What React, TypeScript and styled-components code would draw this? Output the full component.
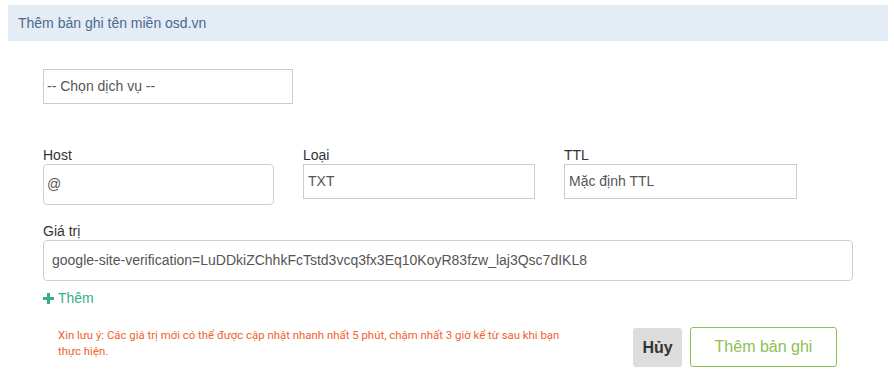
import React from "react";
import styled, { createGlobalStyle } from "styled-components";

const Global = createGlobalStyle`
  html, body { margin: 0; padding: 0; background: #fff; }
  body { font-family: "Liberation Sans", Arial, sans-serif; color: #333; }
  * { box-sizing: border-box; }
`;

const Page = styled.div`
  width: 894px;
  height: 384px;
  padding: 5px 6px 0 8px;
  overflow: hidden;
`;

const Header = styled.div`
  height: 36px;
  background: #e4ecf6;
  color: #4b6a8e;
  font-size: 14px;
  line-height: 36px;
  padding-left: 10px;
`;

const Body = styled.div`
  padding-left: 35px;
  display: flex;
  flex-direction: column;
`;

const Select = styled.div`
  margin-top: 28px;
  width: 250px;
  height: 35px;
  border: 1px solid #cccccc;
  font-size: 14px;
  line-height: 33px;
  color: #555;
  padding-left: 3px;
`;

const FieldRow = styled.div`
  margin-top: 43px;
  display: grid;
  grid-template-columns: 231px 232px 233px;
  column-gap: 29px;
  align-items: start;
`;

const Field = styled.div`
  display: flex;
  flex-direction: column;
`;

const Label = styled.div`
  font-size: 14px;
  line-height: 17px;
  height: 17px;
  color: #333;
`;

const Input = styled.div<{ $h: number; $round?: boolean; $pad: number }>`
  height: ${(p) => p.$h}px;
  border: 1px solid ${(p) => (p.$round ? "#cfcfcf" : "#cccccc")};
  border-radius: ${(p) => (p.$round ? "4px" : "0")};
  font-size: 14px;
  line-height: ${(p) => p.$h - 2}px;
  color: #555;
  padding-left: ${(p) => p.$pad}px;
  white-space: nowrap;
  overflow: hidden;
`;

const ValueField = styled(Field)`
  margin-top: 18px;
  width: 810px;
`;

const AddLink = styled.div`
  margin-top: 9px;
  display: flex;
  align-items: center;
  gap: 4px;
  color: #3aae88;
  font-size: 14px;
  line-height: 17px;
`;

const BottomRow = styled.div`
  margin-top: 20px;
  display: flex;
  align-items: flex-start;
`;

const Note = styled.div`
  margin-left: 15px;
  flex: 0 0 510px;
  font-family: Roboto, "Liberation Sans", sans-serif;
  font-size: 11.4px;
  line-height: 16px;
  color: #f0632c;
`;

const Buttons = styled.div`
  margin-left: 65px;
  display: flex;
  gap: 8px;
  align-items: flex-start;
`;

const CancelBtn = styled.button`
  width: 49px;
  height: 39px;
  margin-top: 1px;
  border: none;
  border-radius: 3px;
  background: #dddddd;
  color: #333;
  font-family: "Liberation Sans", Arial, sans-serif;
  font-weight: bold;
  font-size: 16px;
  padding: 0;
`;

const SubmitBtn = styled.button`
  width: 147px;
  height: 40px;
  border: 1px solid #8cc152;
  border-radius: 3px;
  background: #fff;
  color: #8cc152;
  font-family: "Liberation Sans", Arial, sans-serif;
  font-size: 16px;
  padding: 0;
`;

const Plus = () => (
  <svg width="11" height="11" viewBox="0 0 11 11">
    <path d="M4 0h3v4h4v3H7v4H4V7H0V4h4z" fill="#3aae88" />
  </svg>
);

export default function App() {
  return (
    <>
      <Global />
      <Page>
        <Header>Thêm bản ghi tên miền osd.vn</Header>
        <Body>
          <Select>-- Chọn dịch vụ --</Select>
          <FieldRow>
            <Field>
              <Label>Host</Label>
              <Input $h={41} $round $pad={3}>@</Input>
            </Field>
            <Field>
              <Label>Loại</Label>
              <Input $h={35} $pad={4}>TXT</Input>
            </Field>
            <Field>
              <Label>TTL</Label>
              <Input $h={35} $pad={4}>Mặc định TTL</Input>
            </Field>
          </FieldRow>
          <ValueField>
            <Label>Giá trị</Label>
            <Input $h={41} $round $pad={8}>
              google-site-verification=LuDDkiZChhkFcTstd3vcq3fx3Eq10KoyR83fzw_laj3Qsc7dIKL8
            </Input>
          </ValueField>
          <AddLink>
            <Plus />
            Thêm
          </AddLink>
          <BottomRow>
            <Note>
              Xin lưu ý: Các giá trị mới có thể được cập nhật nhanh nhất 5 phút, chậm nhất 3 giờ kể từ sau khi bạn thực hiện.
            </Note>
            <Buttons>
              <CancelBtn>Hủy</CancelBtn>
              <SubmitBtn>Thêm bản ghi</SubmitBtn>
            </Buttons>
          </BottomRow>
        </Body>
      </Page>
    </>
  );
}
